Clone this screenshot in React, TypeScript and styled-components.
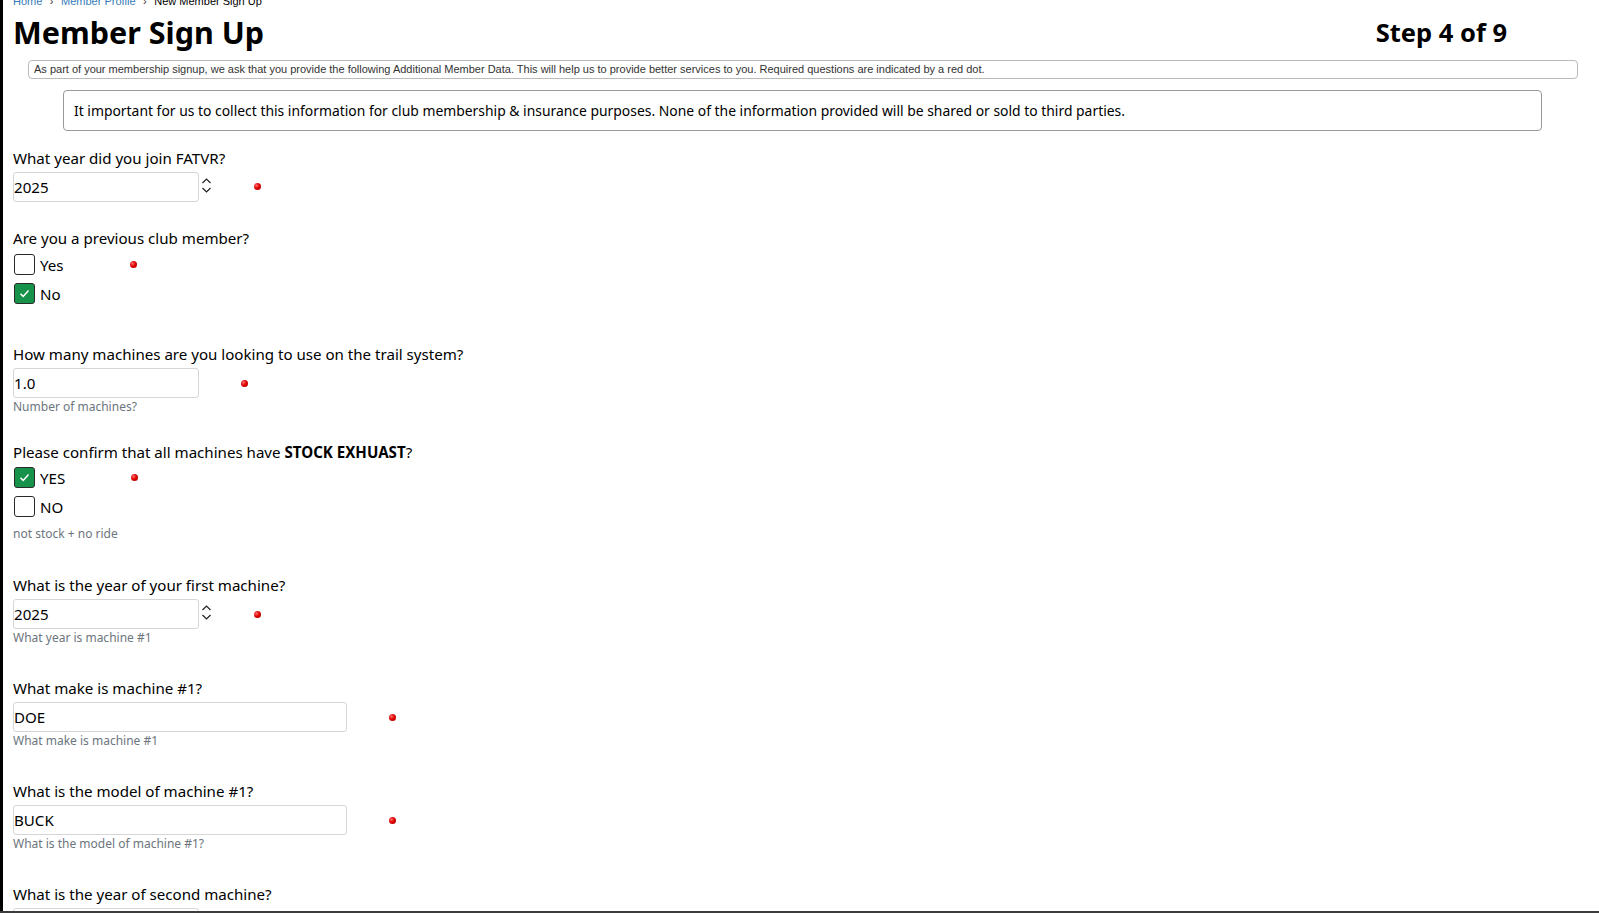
import styled, { createGlobalStyle } from "styled-components"

const GlobalStyle = createGlobalStyle`
  html, body {
    margin: 0;
    padding: 0;
    background: #fff;
  }
  body {
    border-left: 3px solid #000;
    box-sizing: border-box;
    min-height: 100vh;
    overflow: hidden;
    font-family: "Noto Sans", "Open Sans", sans-serif;
    color: #000;
  }
`

const Page = styled.div`
  padding: 0 21px 0 10px;
`

const Crumbs = styled.nav`
  margin-top: -5px;
  display: flex;
  gap: 7.5px;
  font: 11px/13px "Liberation Sans", Arial, sans-serif;
  color: #000;
`

const Crumb = styled.a`
  color: #337ab7;
  text-decoration: none;
`

const Sep = styled.span`
  color: #333;
`

const TitleRow = styled.div`
  display: flex;
  align-items: center;
  justify-content: space-between;
  margin-top: 6px;
`

const Title = styled.h1`
  margin: 0;
  font-size: 30.5px;
  line-height: 36px;
  font-weight: 700;
`

const StepText = styled.div`
  font-size: 25.5px;
  line-height: 36px;
  font-weight: 700;
  margin-right: 71px;
`

const Notice = styled.div`
  margin: 10px 0 0 15px;
  border: 1px solid #bbb;
  border-radius: 4px;
  padding: 0 5px;
  font: 11px/17px "Liberation Sans", Arial, sans-serif;
  color: #333;
`

const Callout = styled.div`
  margin: 11px 36px 0 50px;
  border: 1px solid #999;
  border-radius: 4px;
  padding: 0 10px;
  font-size: 13.9px;
  line-height: 39px;
`

const Form = styled.div`
  margin-top: 16.5px;
`

const Question = styled.div<{ $after?: number }>`
  margin-bottom: ${p => p.$after ?? 30.5}px;
`

const Label = styled.div`
  font-size: 15.1px;
  line-height: 20px;
`

const FieldRow = styled.div<{ $top?: number }>`
  display: flex;
  align-items: center;
  margin-top: ${p => p.$top ?? 4.5}px;
`

const Input = styled.input<{ $wide?: boolean }>`
  box-sizing: border-box;
  width: ${p => (p.$wide ? 334 : 186)}px;
  height: 30px;
  border: 1px solid #d6d6d6;
  border-radius: 3px;
  padding: 0;
  font: 15.1px "Noto Sans", "Open Sans", sans-serif;
  color: #000;
  background: #fff;
  outline: none;
`

const Spinner = styled.svg`
  align-self: flex-start;
  margin: 5px 0 0 2px;
  flex: none;
`

const Dot = styled.span<{ $top?: boolean }>`
  flex: none;
  width: 7px;
  height: 7px;
  border-radius: 50%;
  margin-left: 42px;
  background: radial-gradient(circle at 35% 35%, #ff7070 0%, #e00000 45%, #a00000 100%);
  ${p => (p.$top ? "align-self: flex-start; margin-top: 11px;" : "")}
`

const Options = styled.div``

const Option = styled.label`
  display: flex;
  align-items: center;
  height: 29px;
  padding-right: 24px;
  font-size: 15.1px;
  gap: 5px;
`

const Box = styled.span<{ $on?: boolean }>`
  box-sizing: border-box;
  width: 21px;
  height: 21px;
  margin-left: 1px;
  border: 1px solid #2a2a2a;
  border-radius: 3px;
  background: ${p => (p.$on ? "#16924a" : "#fff")};
  display: flex;
  align-items: center;
  justify-content: center;
`

const Help = styled.div<{ $top?: number }>`
  margin-top: ${p => p.$top ?? 0}px;
  font-size: 12px;
  line-height: 18px;
  color: #6c757d;
`

const Strong = styled.b`
  font-weight: 700;
`

const BottomEdge = styled.div`
  position: fixed;
  left: 0;
  right: 0;
  bottom: 0;
  height: 2px;
  background: #3c3c3c;
`

const Arrows = () => (
  <Spinner width="11" height="17" viewBox="0 0 11 17">
    <path d="M1.5 6 L5.5 2 L9.5 6 M1.5 11 L5.5 15 L9.5 11" fill="none" stroke="#222" strokeWidth="1.2" />
  </Spinner>
)

const Check = ({ on, label }: { on?: boolean; label: string }) => (
  <Option>
    <Box $on={on}>
      {on && (
        <svg width="13" height="13" viewBox="0 0 13 13">
          <path d="M2.5 6.8 L5.2 9.4 L10.5 3.6" fill="none" stroke="#fff" strokeWidth="1.5" />
        </svg>
      )}
    </Box>
    {label}
  </Option>
)

export default function App() {
  return (
    <>
      <GlobalStyle />
      <Page>
        <Crumbs>
          <Crumb href="#">Home</Crumb>
          <Sep>›</Sep>
          <Crumb href="#">Member Profile</Crumb>
          <Sep>›</Sep>
          <span>New Member Sign Up</span>
        </Crumbs>
        <TitleRow>
          <Title>Member Sign Up</Title>
          <StepText>Step 4 of 9</StepText>
        </TitleRow>
        <Notice>
          As part of your membership signup, we ask that you provide the following Additional Member Data. This will
          help us to provide better services to you. Required questions are indicated by a red dot.
        </Notice>
        <Callout>
          It important for us to collect this information for club membership &amp; insurance purposes. None of the
          information provided will be shared or sold to third parties.
        </Callout>
        <Form>
          <Question $after={26}>
            <Label>What year did you join FATVR?</Label>
            <FieldRow $top={4}>
              <Input defaultValue="2025" />
              <Arrows />
              <Dot />
            </FieldRow>
          </Question>
          <Question $after={35.5}>
            <Label>Are you a previous club member?</Label>
            <FieldRow $top={2.5}>
              <Options>
                <Check label="Yes" />
                <Check on label="No" />
              </Options>
              <Dot $top />
            </FieldRow>
          </Question>
          <Question $after={25.5}>
            <Label>How many machines are you looking to use on the trail system?</Label>
            <FieldRow>
              <Input defaultValue="1.0" />
              <Dot />
            </FieldRow>
            <Help>Number of machines?</Help>
          </Question>
          <Question $after={31.5}>
            <Label>
              Please confirm that all machines have <Strong>STOCK EXHUAST</Strong>?
            </Label>
            <FieldRow $top={1.5}>
              <Options>
                <Check on label="YES" />
                <Check label="NO" />
              </Options>
              <Dot $top />
            </FieldRow>
            <Help $top={4}>not stock + no ride</Help>
          </Question>
          <Question>
            <Label>What is the year of your first machine?</Label>
            <FieldRow>
              <Input defaultValue="2025" />
              <Arrows />
              <Dot />
            </FieldRow>
            <Help>What year is machine #1</Help>
          </Question>
          <Question>
            <Label>What make is machine #1?</Label>
            <FieldRow>
              <Input $wide defaultValue="DOE" />
              <Dot />
            </FieldRow>
            <Help>What make is machine #1</Help>
          </Question>
          <Question>
            <Label>What is the model of machine #1?</Label>
            <FieldRow>
              <Input $wide defaultValue="BUCK" />
              <Dot />
            </FieldRow>
            <Help>What is the model of machine #1?</Help>
          </Question>
          <Question>
            <Label>What is the year of second machine?</Label>
            <FieldRow>
              <Input defaultValue="" />
              <Arrows />
              <Dot />
            </FieldRow>
          </Question>
        </Form>
      </Page>
      <BottomEdge />
    </>
  )
}
